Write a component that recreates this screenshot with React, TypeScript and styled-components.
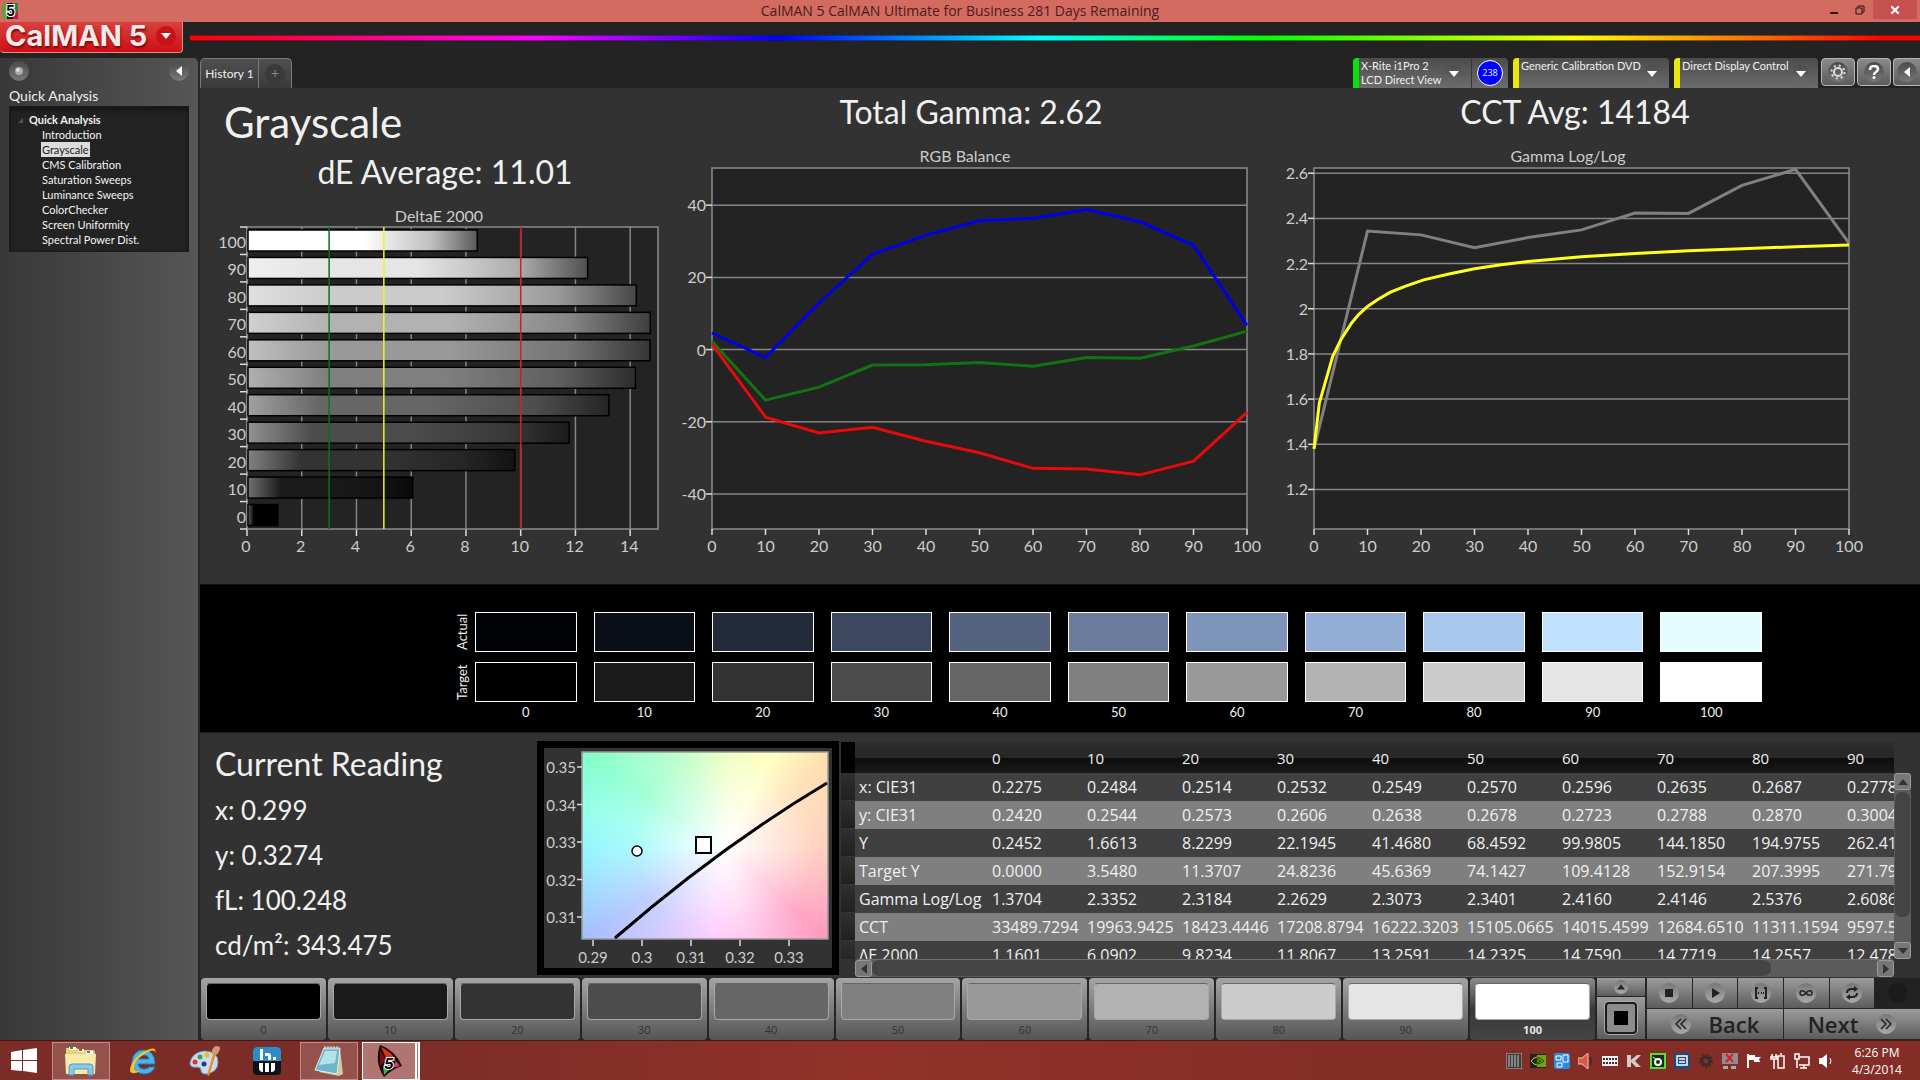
import React from 'react';
import styled, { createGlobalStyle, css } from 'styled-components';

const calibri = `Lato, 'Open Sans', sans-serif`;
const segoe = `'Open Sans', 'Noto Sans', sans-serif`;

const GlobalStyle = createGlobalStyle`
  *, *::before, *::after { box-sizing: border-box; }
  body { margin: 0; background: #232323; color: #f0f0f0; font-family: ${calibri}; }
  button { margin: 0; padding: 0; border: 0; background: none; color: inherit; font: inherit; cursor: pointer; }
  h1, h2, p, ul { margin: 0; padding: 0; font-weight: 400; }
  ul { list-style: none; }
  svg { display: block; }
`;

const Window = styled.div`
  display: flex;
  flex-direction: column;
  min-height: 100vh;
  overflow: hidden;
`;

/* ---------- title bar ---------- */

const TitleBar = styled.header`
  display: grid;
  grid-template-columns: 1fr auto 1fr;
  align-items: center;
  height: 22px;
  background: #d36b61;
  color: #4a1c1a;
  font: 14px/20px ${segoe};
`;
const AppMark = styled.svg`
  margin-left: 2px;
  overflow: visible;
`;
const WindowButtons = styled.div`
  display: flex;
  align-self: start;
  justify-content: flex-end;
  padding-right: 3px;
`;
const WindowButton = styled.button<{ $close?: boolean }>`
  display: grid;
  place-items: center;
  width: ${p => (p.$close ? 44 : 26)}px;
  height: 19px;
  background: ${p => (p.$close ? '#c75050' : 'transparent')};
`;

/* ---------- brand strip ---------- */

const BrandStrip = styled.div`
  display: flex;
  align-items: flex-start;
  gap: 7px;
  height: 36px;
`;
const Brand = styled.button`
  display: flex;
  align-items: center;
  justify-content: space-between;
  width: 183px;
  height: 31px;
  padding: 0 6px 2px 5px;
  border: 1px solid #d9938f;
  border-top: 0;
  border-left: 0;
  border-radius: 0 0 4px 4px;
  background: linear-gradient(#d8403f, #cf0f12);
  color: #f2e9e9;
  font: 700 29px/28px Inter, sans-serif;
  text-shadow: 1px 2px 2px #7a0a0a;
  white-space: nowrap;
`;
const BrandArrow = styled.span`
  display: grid;
  place-items: center;
  width: 20px;
  height: 20px;
  border-radius: 50%;
  background: #c51417;
`;
const Rainbow = styled.div`
  flex: 1;
  height: 6px;
  margin-top: 13px;
  border: solid rgba(30, 30, 30, 0.55);
  border-width: 1px 0;
  background: linear-gradient(90deg, #f00 0%, #f0f 20%, #00f 34%, #0ff 49%, #0f0 62%, #ff0 80%, #f00 98%) border-box;
`;

/* ---------- sidebar ---------- */

const Body = styled.div`
  display: flex;
  flex: 1;
`;
const Sidebar = styled.aside`
  flex: 0 0 200px;
  padding: 3px 9px 0;
  border-right: 2px solid #262626;
  border-radius: 0 6px 0 0;
  background: linear-gradient(90deg, #383838, #565656);
`;
const SidebarTop = styled.div`
  display: flex;
  justify-content: space-between;
`;
const RoundButton = styled.button`
  display: grid;
  place-items: center;
  width: 20px;
  height: 20px;
  border-radius: 50%;
  background: linear-gradient(#4a4a4a, #787878);
`;
const SidebarTitle = styled.h2`
  padding-top: 7px;
  font-size: 14px;
  line-height: 16px;
  margin-bottom: 2px;
`;
const Tree = styled.nav`
  height: 146px;
  padding: 6px 8px;
  border: 1px solid #1b1b1b;
  background: #232323;
  box-shadow: inset 0 3px 5px #141414;
  font-size: 11px;
  line-height: 15px;
`;
const TreeRoot = styled.div`
  display: flex;
  align-items: center;
  gap: 6px;
  font-weight: 700;
  line-height: 14px;
`;
const TreeLink = styled.a<{ $active?: boolean }>`
  display: table;
  margin-left: 23px;
  padding: 0 1px;
  color: ${p => (p.$active ? '#222' : '#f4f4f4')};
  background: ${p => (p.$active ? '#dcdcdc' : 'transparent')};
  text-decoration: none;
`;

/* ---------- tabs and source bar ---------- */

const Main = styled.main`
  display: flex;
  flex: 1;
  flex-direction: column;
  min-width: 0;
  background: #323232;
`;
const TabBar = styled.div`
  display: flex;
  justify-content: space-between;
  height: 30px;
  background: #232323;
`;
const Tabs = styled.div`
  display: flex;
  border: 1px solid #7a7a7a;
  border-bottom: 0;
  border-radius: 5px 5px 0 0;
  background: linear-gradient(#505050, #3a3a3a);
`;
const Tab = styled.button`
  width: 58px;
  border-right: 1px solid #7a7a7a;
  font-size: 12px;
`;
const AddTab = styled.button`
  display: grid;
  place-items: center;
  width: 32px;
  color: #8a8a8a;
  font: 14px/20px ${segoe};

  span {
    width: 20px;
    height: 20px;
    border-radius: 50%;
    background: #3a3a3a;
  }
`;
const Sources = styled.div`
  display: flex;
  gap: 5px;
`;
const Source = styled.div<{ $tone: string }>`
  display: flex;
  border-radius: 4px 4px 0 0;
  border-left: 6px solid ${p => p.$tone};
  background: linear-gradient(#4c4c4c, #6c6c6c);
`;
const SourceButton = styled.button<{ $width: number }>`
  display: flex;
  align-items: flex-start;
  justify-content: space-between;
  width: ${p => p.$width}px;
  padding: 1px 8px 0 2px;
  font-size: 11px;
  line-height: 14px;
  text-align: left;
  white-space: nowrap;
`;
const Chevron = styled.span`
  display: grid;
  place-items: center;
  flex: 0 0 18px;
  height: 18px;
  margin-top: 6px;
  border-radius: 50%;
  background: linear-gradient(#4c4c4c, #6a6a6a);
`;
const Count = styled.div`
  display: grid;
  place-items: center;
  width: 37px;
  border-left: 1px solid #383838;

  span {
    width: 26px;
    height: 26px;
    border: 1px solid #fff;
    border-radius: 50%;
    background: #00f;
    font: 9px/24px ${segoe};
    text-align: center;
  }
`;
const Tools = styled.div`
  display: flex;
  gap: 2px;
  margin-left: -2px;
`;
const Tool = styled.button<{ $edge?: boolean }>`
  display: grid;
  place-items: center;
  width: ${p => (p.$edge ? 27 : 34)}px;
  height: 28px;
  border: 1px solid #b5b5b5;
  border-right-width: ${p => (p.$edge ? 0 : 1)}px;
  border-radius: ${p => (p.$edge ? '4px 0 0 4px' : '4px')};
  background: linear-gradient(#8a8a8a, #5c5c5c);
`;

/* ---------- charts ---------- */

const Charts = styled.section`
  display: grid;
  grid-template-columns: 490fr 562fr 646fr;
  padding: 4px 22px 24px 0;
  border-bottom: 1px solid #111;
`;
const ChartColumn = styled.div`
  min-width: 0;
`;
const PageTitle = styled.h1`
  padding: 6px 0 6px 24px;
  font-size: 42px;
  line-height: 48px;
`;
const Metric = styled.h2`
  margin-bottom: 13px;
  font-size: 32px;
  line-height: 40px;
  text-align: center;
`;
const Chart = styled.svg`
  width: 100%;
  overflow: visible;
  font: 16px ${calibri};
  fill: #ccc;
`;

/* ---------- swatch band ---------- */

const Band = styled.section`
  display: grid;
  grid-template-columns: 21px repeat(11, minmax(0, 1fr));
  column-gap: 17px;
  row-gap: 10px;
  padding: 27px 141px 0 254px;
  height: 148px;
  align-content: start;
  border-bottom: 1px solid #1c1c1c;
  background: #000;
`;
const BandLabel = styled.div`
  display: grid;
  place-items: center;
  width: 17px;
  height: 40px;
  font: 13px/17px ${calibri};
  writing-mode: vertical-rl;
  transform: rotate(180deg);
`;
const Swatches = styled.div`
  display: contents;
`;
const Swatch = styled.div<{ $color: string }>`
  height: 40px;
  border: 1px solid #fff;
  background: ${p => p.$color};
  margin-left: -17px;
  margin-right: 17px;
`;
const SwatchName = styled.div`
  margin: -7px 17px 0 -17px;
  font-size: 13px;
  line-height: 14px;
  text-align: center;
`;

/* ---------- readings ---------- */

const Details = styled.section`
  display: flex;
  height: 245px;
  padding: 8px 9px 1px 15px;
`;
const Reading = styled.div`
  flex: 0 0 322px;
  padding-top: 1px;

  h2 { margin-bottom: 2px; font-size: 32px; line-height: 44px; }
  p { font-size: 26px; line-height: 45px; }
`;
const CiePanel = styled.div`
  flex: 0 0 302px;
  height: 234px;
  border: 7px solid #000;
`;
const CieChart = styled.svg`
  width: 288px;
  height: 220px;
  overflow: visible;
  font: 15px ${calibri};
  fill: #ccc;
  background:
    radial-gradient(circle at 58% 51%, #fff 0, rgba(255, 255, 255, 0.8) 28px, rgba(255, 255, 255, 0.3) 90px, transparent 170px),
    conic-gradient(from 0deg at 58% 51%, #e8ffb0 0deg, #ffffac 28deg, #ffd8a0 50deg, #ffc0a8 90deg,
      #ff88b4 132deg, #ffb4e4 165deg, #ffb8ff 185deg, #a4bcff 237deg, #88f4ff 268deg, #88ffe8 285deg, #80ffc8 304deg, #b0ffb8 338deg, #e8ffb0 360deg);
  background-position: 38px 4px;
  background-size: 246px 187px;
  background-repeat: no-repeat;
`;
const GridPanel = styled.div`
  display: grid;
  flex: 1;
  grid-template-columns: 14px minmax(0, 1fr) 17px;
  grid-template-rows: 217px 18px;
  min-width: 0;
  margin-left: 2px;
  padding-top: 1px;
`;
const RowHandles = styled.div`
  background: linear-gradient(#000 31px, transparent 31px),
    repeating-linear-gradient(#303030 31px, #202020 58px, #3a3a3a 58px, #303030 59px);
`;
const TableView = styled.div`
  overflow: hidden;
`;
const DataTable = styled.table`
  width: 1087px;
  table-layout: fixed;
  border-collapse: collapse;
  font: 16px/20px ${segoe};
  text-align: left;
  white-space: nowrap;

  col:first-child { width: 137px; }
  th, td { padding: 0; font-weight: 400; }
  th:first-child { padding-left: 4px; }
  thead th {
    height: 31px;
    background: linear-gradient(#2e2e2e, #262626 50%, #0c0c0c 50%, #1a1a1a);
    font-size: 15px;
  }
  tbody th, tbody td { height: 28px; }
  tbody tr { background: #404040; }
  tbody tr:nth-child(even) { background: #7f7f7f; }
`;
const VScroll = styled.div`
  display: flex;
  flex-direction: column;
  justify-content: space-between;
  margin-top: 31px;
  border-radius: 3px;
  background: #5c5c5c;
`;
const HScroll = styled.div`
  display: flex;
  grid-column: 2;
  justify-content: space-between;
  border-top: 1px solid #6e6e6e;
  border-radius: 4px;
  background: #5c5c5c;
`;
const ScrollButton = styled.button`
  display: grid;
  place-items: center;
  flex: 0 0 17px;
  width: 17px;
  border: 1px solid #9a9a9a;
  border-radius: 3px;
  background: #777;
`;
const Track = styled.div<{ $vertical?: boolean }>`
  flex: 1;
  ${p =>
    p.$vertical
      ? css`padding: 2px 1px 25px;`
      : css`padding: 0 106px 1px 0;`}

  div {
    height: 100%;
    border-radius: 7px;
    background: #444;
  }
`;

/* ---------- pattern strip ---------- */

const Strip = styled.section`
  display: flex;
  gap: 2px;
  height: 62px;
  padding: 0 0 1px 1px;
  background: #262626;
`;
const Patterns = styled.div`
  display: grid;
  flex: 1;
  grid-template-columns: repeat(11, minmax(0, 1fr));
  gap: 2px;
`;
const Pattern = styled.button<{ $active?: boolean }>`
  display: flex;
  flex-direction: column;
  padding: 5px 5px 0;
  border-radius: 4px;
  background: ${p => (p.$active ? 'linear-gradient(#8c8c8c, #3a3a3a 50%, #444)' : 'linear-gradient(#a4a4a4, #555)')};
  color: ${p => (p.$active ? '#e6e6e6' : '#333')};
  font: ${p => (p.$active ? 700 : 400)} 11px/20px ${segoe};
`;
const PatternColor = styled.span<{ $color: string }>`
  width: 100%;
  height: 37px;
  border: 1px solid #a8a8a8;
  border-top-color: #666;
  border-radius: 4px;
  background: ${p => p.$color};
`;
const PatternName = styled.span`
  width: 100%;
  text-align: center;
`;
const PatternSide = styled.div`
  display: grid;
  grid-template-rows: 18px 1fr;
  gap: 1px;
  width: 48px;
`;
const Transport = styled.div`
  display: grid;
  grid-template-columns: repeat(6, 1fr);
  grid-template-rows: 30px 1fr;
  gap: 1px;
  width: 273px;
`;
const Key = styled.button<{ $span?: number; $dim?: boolean }>`
  display: flex;
  align-items: center;
  justify-content: center;
  gap: 18px;
  grid-column: span ${p => p.$span ?? 1};
  background: ${p => (p.$dim ? '#222' : 'linear-gradient(#9c9c9c, #5c5c5c)')};
  color: #222;
  font: 600 22px/28px ${segoe};
`;
const KeyDisc = styled.span<{ $dim?: boolean; $small?: boolean }>`
  display: grid;
  place-items: center;
  width: ${p => (p.$small ? 14 : 20)}px;
  height: ${p => (p.$small ? 14 : 20)}px;
  border-radius: 50%;
  background: ${p => (p.$dim ? '#1b1b1b' : 'linear-gradient(#777, #aaa)')};
`;
const StopFrame = styled.span`
  display: grid;
  place-items: center;
  width: 32px;
  height: 32px;
  border: 2px solid #1c1c1c;
  border-radius: 4px;
  background: #8c8c8c;
  box-shadow: 0 0 0 1px #aaa;
`;

/* ---------- taskbar ---------- */

const Taskbar = styled.footer`
  display: flex;
  justify-content: space-between;
  height: 40px;
  border-top: 1px solid #4a1714;
  background: linear-gradient(90deg, #7c2c27, #7c2c27 20%, #90322a 45%, #822d26 75%, #852d27);
`;
const Pins = styled.div`
  display: flex;
  align-items: center;
  gap: 4px;
`;
const Pin = styled.button<{ $open?: boolean; $focus?: boolean }>`
  display: grid;
  place-items: center;
  width: 58px;
  height: 38px;
  border: 1px solid ${p => (p.$focus ? '#fff' : p.$open ? '#c08c88' : 'transparent')};
  background: ${p => (p.$focus ? '#b07570' : p.$open ? '#95524d' : 'transparent')};
  ${p => p.$focus && css`border-right: 5px double #fff;`}
`;
const Start = styled(Pin)`
  width: 48px;
`;
const Tray = styled.div`
  display: flex;
  align-items: center;
  gap: 8px;
  padding-right: 14px;

  button { width: 16px; height: 16px; }
`;
const Clock = styled.time`
  margin-left: 6px;
  width: 58px;
  font: 12px/17px ${segoe};
  text-align: center;
  color: #fff;
`;

/* ---------- data ---------- */

const levels = [0, 10, 20, 30, 40, 50, 60, 70, 80, 90, 100];
const grays = ['#000', '#1a1a1a', '#333', '#4c4c4c', '#666', '#808080', '#999', '#b2b2b2', '#ccc', '#e5e5e5', '#fff'];
const actual = ['#010206', '#0a0f18', '#232b3b', '#3d4960', '#53637f', '#697c9c', '#7d94ba', '#93aed6', '#a9c7ed', '#c0e0ff', '#e3fcff'];
const pages = ['Introduction', 'Grayscale', 'CMS Calibration', 'Saturation Sweeps', 'Luminance Sweeps', 'ColorChecker', 'Screen Uniformity', 'Spectral Power Dist.'];
const deltaE = [1.16, 6.09, 9.82, 11.81, 13.26, 14.23, 14.76, 14.77, 14.26, 12.48, 8.45];

const balance = [
  { color: '#0000e6', values: [4.6, -2.2, 12.9, 26.4, 31.7, 35.7, 36.4, 38.8, 35.4, 28.9, 6.7] },
  { color: '#127312', values: [2.3, -14, -10.4, -4.3, -4.2, -3.6, -4.6, -2.2, -2.4, 1, 5.1] },
  { color: '#e60a0a', values: [1.5, -18.7, -23.1, -21.5, -25.4, -28.6, -32.9, -33.1, -34.7, -30.9, -17.4] },
];
const gammaMeasured = [1.38, 2.344, 2.327, 2.27, 2.315, 2.349, 2.424, 2.422, 2.546, 2.617, 2.29];
const gammaTarget: [number, number][] = [
  [0, 1.38], [1, 1.583], [3.5, 1.789], [5, 1.862], [7, 1.936], [8.3, 1.973], [10, 2.01], [12, 2.042], [14.2, 2.072],
  [17, 2.099], [20.5, 2.128], [25, 2.153], [30, 2.177], [35, 2.195], [40, 2.209], [50, 2.23], [60, 2.245], [70, 2.257],
  [80, 2.266], [90, 2.274], [100, 2.282],
];

const rows: [string, string[]][] = [
  ['x: CIE31', ['0.2275', '0.2484', '0.2514', '0.2532', '0.2549', '0.2570', '0.2596', '0.2635', '0.2687', '0.2778']],
  ['y: CIE31', ['0.2420', '0.2544', '0.2573', '0.2606', '0.2638', '0.2678', '0.2723', '0.2788', '0.2870', '0.3004']],
  ['Y', ['0.2452', '1.6613', '8.2299', '22.1945', '41.4680', '68.4592', '99.9805', '144.1850', '194.9755', '262.4170']],
  ['Target Y', ['0.0000', '3.5480', '11.3707', '24.8236', '45.6369', '74.1427', '109.4128', '152.9154', '207.3995', '271.7950']],
  ['Gamma Log/Log', ['1.3704', '2.3352', '2.3184', '2.2629', '2.3073', '2.3401', '2.4160', '2.4146', '2.5376', '2.6086']],
  ['CCT', ['33489.7294', '19963.9425', '18423.4446', '17208.8794', '16222.3203', '15105.0665', '14015.4599', '12684.6510', '11311.1594', '9597.5210']],
  ['ΔE 2000', ['1.1601', '6.0902', '9.8234', '11.8067', '13.2591', '14.2325', '14.7590', '14.7719', '14.2557', '12.4780']],
];

/* ---------- chart drawings ---------- */

const Caret = ({ dir = 'down', color = '#fff', size = 10 }: { dir?: 'up' | 'down' | 'left' | 'right'; color?: string; size?: number }) => {
  const d = { up: 'M0 8 5 2l5 6z', down: 'M0 2h10L5 8z', left: 'M8 0v10L2 5z', right: 'M2 0v10l6-5z' }[dir];
  return (
    <svg width={size} height={size} viewBox="0 0 10 10" aria-hidden="true">
      <path d={d} fill={color} />
    </svg>
  );
};

function DeltaEChart() {
  const left = 47, top = 22, width = 411, height = 302, row = height / 11;
  const x = (v: number) => left + v * 27.37;
  return (
    <Chart viewBox="0 0 490 355" role="img" aria-label="DeltaE 2000">
      <defs>
        {levels.map((l, i) => {
          const v = Math.round(l * 2.55);
          const lite = Math.round(v + (255 - v) * 0.38);
          const end = Math.round(v * 0.35);
          const mid = Math.round(v * 0.75);
          return (
            <linearGradient id={`bar${l}`} key={l}>
              <stop offset="0" stopColor={`rgb(${lite},${lite},${lite})`} />
              <stop offset="0.2" stopColor={grays[i]} />
              <stop offset="0.5" stopColor={grays[i]} />
              <stop offset="0.8" stopColor={`rgb(${mid},${mid},${mid})`} />
              <stop offset="1" stopColor={`rgb(${end},${end},${end})`} />
            </linearGradient>
          );
        })}
      </defs>
      <text x="239" y="17" textAnchor="middle">DeltaE 2000</text>
      <rect x={left} y={top} width={width} height={height} fill="#232323" />
      {[0, 2, 4, 6, 8, 10, 12, 14].map(v => (
        <g key={v}>
          <path d={`M${x(v)} ${top}V${top + height}`} stroke="#858585" strokeWidth="1.5" />
          <path d={`M${x(v)} ${top + height}v7`} stroke="#ddd" strokeWidth="1.5" />
          <text x={x(v) - 1} y="347" textAnchor="middle">{v}</text>
        </g>
      ))}
      <rect x={left} y={top} width={width} height={height} fill="none" stroke="#8c8c8c" strokeWidth="1.5" />
      {levels.map((l, i) => {
        const y = top + (10 - i) * row;
        return (
          <g key={l}>
            <rect x={left + 1} y={y + 3} width={deltaE[i] * 27.37 - 2} height="21" fill={`url(#bar${l})`} stroke="#000" strokeWidth="1.5" />
            <path d={`M${left - 7} ${y}h7`} stroke="#ddd" strokeWidth="1.5" />
            <text x={left - 1} y={y + 21} textAnchor="end">{l}</text>
          </g>
        );
      })}
      <path d={`M${left - 7} ${top + height}h7`} stroke="#ddd" strokeWidth="1.5" />
      <path d={`M${x(3)} ${top}v${height}`} stroke="#107010" strokeWidth="1.5" />
      <path d={`M${x(5)} ${top}v${height}`} stroke="#f4f41e" strokeWidth="1.5" />
      <path d={`M${x(10)} ${top}v${height}`} stroke="#d81c1c" strokeWidth="1.5" />
    </Chart>
  );
}

interface LineChartProps {
  title: string;
  view: number;
  left: number;
  titleX: number;
  min: number;
  max: number;
  ticks: number[];
  lines: { color: string; points: [number, number][] }[];
}

function LineChart({ title, view, left, titleX, min, max, ticks, lines }: LineChartProps) {
  const top = 23, height = 361, width = 535;
  const x = (v: number) => left + (v / 100) * width;
  const y = (v: number) => top + ((max - v) / (max - min)) * height;
  return (
    <Chart viewBox={`0 0 ${view} 415`} role="img" aria-label={title}>
      <text x={titleX} y="17" textAnchor="middle">{title}</text>
      <rect x={left} y={top} width={width} height={height} fill="#232323" stroke="#8c8c8c" strokeWidth="1.5" />
      {ticks.map(t => (
        <g key={t}>
          <path d={`M${left} ${y(t)}h${width}`} stroke="#858585" strokeWidth="1.5" />
          <path d={`M${left - 6} ${y(t)}h6`} stroke="#ddd" strokeWidth="1.5" />
          <text x={left - 6} y={y(t) + 6} textAnchor="end">{t}</text>
        </g>
      ))}
      {levels.map(l => (
        <g key={l}>
          <path d={`M${x(l)} ${top + height}v6`} stroke="#ddd" strokeWidth="1.5" />
          <text x={x(l)} y="407" textAnchor="middle">{l}</text>
        </g>
      ))}
      {lines.map(line => (
        <polyline
          key={line.color}
          points={line.points.map(([px, py]) => `${x(px)},${y(py)}`).join(' ')}
          fill="none"
          stroke={line.color}
          strokeWidth="3"
        />
      ))}
    </Chart>
  );
}

const byLevel = (values: number[]) => values.map((v, i) => [levels[i], v] as [number, number]);

function Cie() {
  return (
    <CieChart viewBox="0 0 288 220" role="img" aria-label="CIE chromaticity">
      <rect x="38" y="4" width="246" height="187" fill="none" stroke="#999" strokeWidth="1.5" />
      {['0.35', '0.34', '0.33', '0.32', '0.31'].map((t, i) => (
        <g key={t}>
          <path d={`M33 ${19 + i * 37.5}h5`} stroke="#ddd" strokeWidth="1.5" />
          <text x="32" y={25 + i * 37.5} textAnchor="end">{t}</text>
        </g>
      ))}
      {['0.29', '0.3', '0.31', '0.32', '0.33'].map((t, i) => (
        <g key={t}>
          <path d={`M${49 + i * 49} 192v6`} stroke="#ddd" strokeWidth="1.5" />
          <text x={49 + i * 49} y="215" textAnchor="middle">{t}</text>
        </g>
      ))}
      <path d="M71 190Q176 99 283 35" fill="none" stroke="#000" strokeWidth="3" />
      <circle cx="93" cy="103" r="5" fill="#fff" stroke="#000" strokeWidth="1.5" />
      <rect x="152" y="89" width="15" height="16" fill="#fff" stroke="#000" strokeWidth="2" />
    </CieChart>
  );
}

/* ---------- icons ---------- */

const Folder = () => (
  <svg width="34" height="30" viewBox="0 0 34 30">
    <path d="M2 5V2h11l2 2h15l1 3v21H2z" fill="#e9cf79" />
    <path d="M5 1h7v3H5zM14 3h6v3h-6zM22 5h7v3h-7z" fill="#fff" />
    <path d="M6 1h3v2H6z" fill="#2c9a3c" /><path d="M15 3h3v2h-3z" fill="#c8402c" /><path d="M23 5h3v2h-3z" fill="#2c86c8" />
    <path d="M1 8h31l-1 20H2z" fill="#f8eba8" />
    <path d="M5 29v-8q0-3 3-3h18q3 0 3 3v8h-5v-6H10v6z" fill="#8cc8e6" stroke="#4c9cc8" />
  </svg>
);
const Explorer = () => (
  <svg width="32" height="32" viewBox="0 0 32 32">
    <path d="M28 19H11q1 5 6 5 4 0 5-2h6q-3 7-11 7Q6 28 5 17 6 5 17 5q11 1 11 14zM11 14h11q-1-4-5-4-5 0-6 4z" fill="#4db4ea" stroke="#1c7cc0" />
    <path d="M28 9q2-7-5-5Q12 7 5 18q-4 9 0 10 3 1 8-2-6 1-6-4 1-7 9-12 8-6 12-4z" fill="#f5c32c" />
  </svg>
);
const Paint = () => (
  <svg width="34" height="32" viewBox="0 0 34 32">
    <path d="M17 6q13 1 13 11 0 10-12 12-5 0-5-4 0-3-4-3-7 1-7-4Q4 7 17 6z" fill="#c8dcf0" stroke="#7c9cc0" />
    <circle cx="7" cy="17" r="2.5" fill="#d8342c" /><circle cx="12" cy="12" r="2.5" fill="#3ca43c" /><circle cx="19" cy="10" r="2.5" fill="#f0b820" />
    <circle cx="16" cy="19" r="2.5" fill="#2c3c70" />
    <path d="M28 9 21 31l-2-1 6-21z" fill="#e8902c" /><path d="M24 9q-1-6 4-8 5 0 4 3-1 4-4 6z" fill="#c89c70" />
  </svg>
);
const Hcfr = () => (
  <svg width="30" height="30" viewBox="0 0 30 30">
    <rect x="1" y="1" width="28" height="28" rx="4" fill="#0c1218" />
    <path d="M1 15V5q0-4 4-4h20q4 0 4 4v10z" fill="#2c8cc8" />
    <path d="M8 3h3v11H8zM13 7h3q3 0 3 3v4h-3v-4h-3zM21 11h3v3h-3z" fill="#fff" />
    <path d="M7 17h4v9q-4 0-4-4zM13 17h4v9h-4zM19 17h4v6q0 3-4 3z" fill="#fff" />
  </svg>
);
const Notepad = () => (
  <svg width="34" height="32" viewBox="0 0 34 32">
    <path d="M28 3l3 26-4 2-20-4z" fill="#d8c89c" />
    <path d="M12 3h16l-3 26L3 25z" fill="#6fb6c8" stroke="#d8f0f4" />
    <path d="M13 6h12l-2 12L7 20z" fill="#b4e0e8" />
    <path d="M13 1v4M16 1v4M19 1v4M22 1v4M25 1v4" stroke="#ddd" />
  </svg>
);
const CalmanIcon = () => (
  <svg width="34" height="34" viewBox="0 0 34 34">
    <path d="M8 1q15 5 22 21-10 3-18 11Q2 18 8 1z" fill="#160808" />
    <path d="M9 3q10 4 15 14l-10-3z" fill="#d8341c" /><path d="M8 6l6 10-6 6z" fill="#7c1010" />
    <path d="M24 17l4 5-8 2z" fill="#d83c7c" /><path d="M11 22l6 4-5 5z" fill="#3cb43c" />
    <text x="12" y="25" fontFamily="Inter, sans-serif" fontWeight="700" fontStyle="italic" fontSize="15" fill="#000" stroke="#fff" strokeWidth="2" paintOrder="stroke">5</text>
  </svg>
);

const trayIcons: [string, React.ReactNode][] = [
  ['Keyboard', <><rect width="16" height="16" fill="#3c3c3c" stroke="#bbb" /><path d="M2 3h12M2 5h12M2 7h12M2 9h12M2 11h12M2 13h12" stroke="#ccc" strokeDasharray="2 1" /></>],
  ['NVIDIA', <><rect width="16" height="14" y="1" fill="#222" /><path d="M7 2h9v12H7z" fill="#6ca414" /><path d="M1 8q6-7 13 0-7 6-13 0zM5 8q3-3 6 0-3 3-6 0z" fill="none" stroke="#2a3c0c" /><path d="M1 8q3-4 6-4M1 8q3 4 6 4" fill="none" stroke="#a4d83c" /></>],
  ['Graphics', <><rect width="16" height="16" rx="2" fill="#2c8cd8" /><path d="M2 3h5v4H2zM9 2h5v7H9zM3 10h5v4H3z" fill="none" stroke="#fff" /></>],
  ['Audio level', <><path d="M0 5h4l6-5v16l-6-5H0z" fill="#d85c44" stroke="#f4c0b0" /><path d="M12 4q3 4 0 8" fill="none" stroke="#222" /></>],
  ['Input', <><rect y="3" width="16" height="10" fill="#eee" /><path d="M1 6h14M1 10h14" stroke="#333" strokeWidth="2" strokeDasharray="2 1" /></>],
  ['Antivirus', <path d="M1 2h4v5l6-5h4L9 8l6 6h-5L5 9v5H1z" fill="#d0ccc8" />],
  ['Camera', <><rect x="1" y="1" width="14" height="14" fill="#123012" stroke="#5cd83c" strokeWidth="2" /><circle cx="8" cy="9" r="3" fill="none" stroke="#fff" strokeWidth="2" /><path d="M3 4l4 3" stroke="#fff" /></>],
  ['Display', <><rect width="16" height="16" fill="#1c4c78" /><path d="M3 3h10v9H3zM5 6h6M5 9h6" fill="none" stroke="#fff" strokeWidth="1.5" /></>],
  ['Settings', <><circle cx="8" cy="8" r="4" fill="none" stroke="#3c2c2c" strokeWidth="3" /><circle cx="8" cy="8" r="6" fill="none" stroke="#3c2c2c" strokeWidth="2" strokeDasharray="2 2" /></>],
  ['Network error', <><rect width="16" height="11" fill="#8c8c94" /><path d="M4 1l7 8M11 1 4 9" stroke="#e01c1c" strokeWidth="2" /><path d="M1 13h5v3H1zM9 13h5v3H9z" fill="#aaa" /></>],
  ['Action center', <><path d="M2 1v14" stroke="#fff" strokeWidth="2" /><path d="M3 2h6v2h6l-2 2 1 3H8V7H3z" fill="#fff" /></>],
  ['Power', <path d="M8 3h6v12H8zM10 1h2M4 6v10M2 1v3M6 1v3M1 4h6v2H1z" fill="none" stroke="#fff" strokeWidth="1.5" />],
  ['Network', <path d="M5 4h10v8H5M10 12v3M6 15h7M1 1h4v5H1zM3 6v9" fill="none" stroke="#fff" strokeWidth="1.5" />],
  ['Volume', <><path d="M1 5h3l5-4v14l-5-4H1z" fill="#fff" /><path d="M12 5q2 3 0 6" fill="none" stroke="#fff" /></>],
];

const keyIcons: [string, React.ReactNode][] = [
  ['Stop', <path d="M3 3h8v8H3z" fill="#222" />],
  ['Play', <path d="M4 2v10l8-5z" fill="#222" />],
  ['Read series', <path d="M4 2H2v10h2M10 2h2v10h-2M4 7h1M7 7h1M9 7h1" fill="none" stroke="#222" strokeWidth="2" />],
  ['Continuous', <path d="M7 7C5 4 1 4 1 7s4 3 6 0 6-3 6 0-4 3-6 0z" fill="none" stroke="#222" strokeWidth="1.5" />],
  ['Refresh', <><path d="M2 7q0-4 5-4h2M12 7q0 4-5 4H5" fill="none" stroke="#222" strokeWidth="2" /><path d="M9 0l4 3-4 3zM5 8l-4 3 4 3z" fill="#222" /></>],
];

const Chevrons = ({ flip }: { flip?: boolean }) => (
  <svg width="12" height="12" viewBox="0 0 12 12" aria-hidden="true">
    <path d={flip ? 'M1 1l5 5-5 5M6 1l5 5-5 5' : 'M6 1 1 6l5 5M11 1 6 6l5 5'} fill="none" stroke="#222" strokeWidth="1.5" />
  </svg>
);

export default function App() {
  return (
    <Window>
      <GlobalStyle />
      <TitleBar>
        <AppMark width="16" height="16" viewBox="0 0 16 16">
          <rect width="16" height="16" fill="#2a1010" />
          <path d="M0 0h5v16H0z" fill="#64a040" /><path d="M11 0h5v9h-5z" fill="#308048" /><path d="M11 9h5v7h-5z" fill="#b02048" />
          <text x="4" y="13" fontFamily="Inter, sans-serif" fontSize="14" fontWeight="700" fill="#000" stroke="#fff" strokeWidth="2" paintOrder="stroke">5</text>
        </AppMark>
        <span>CalMAN 5 CalMAN Ultimate for Business 281 Days Remaining</span>
        <WindowButtons>
          <WindowButton aria-label="Minimize"><svg width="10" height="10"><path d="M1 8h8" stroke="#2a1010" strokeWidth="2" /></svg></WindowButton>
          <WindowButton aria-label="Restore"><svg width="10" height="10"><path d="M1 3h6v6H1zM3 3V1h6v6H7" fill="none" stroke="#2a1010" /></svg></WindowButton>
          <WindowButton $close aria-label="Close"><svg width="8" height="8"><path d="M0 0l8 8M8 0 0 8" stroke="#fff" strokeWidth="2" /></svg></WindowButton>
        </WindowButtons>
      </TitleBar>

      <BrandStrip>
        <Brand>
          <span>CalMAN 5</span>
          <BrandArrow><Caret /></BrandArrow>
        </Brand>
        <Rainbow />
      </BrandStrip>

      <Body>
        <Sidebar>
          <SidebarTop>
            <RoundButton aria-label="Record">
              <svg width="10" height="10"><circle cx="5" cy="5" r="4" fill="#aaa" /><circle cx="4" cy="4" r="2" fill="#ddd" /></svg>
            </RoundButton>
            <RoundButton aria-label="Collapse"><Caret dir="left" /></RoundButton>
          </SidebarTop>
          <SidebarTitle>Quick Analysis</SidebarTitle>
          <Tree aria-label="Workflow">
            <TreeRoot>
              <svg width="5" height="5"><path d="M5 0v5H0z" fill="#555" /></svg>
              Quick Analysis
            </TreeRoot>
            <ul>
              {pages.map(p => (
                <li key={p}><TreeLink href="#" $active={p === 'Grayscale'}>{p}</TreeLink></li>
              ))}
            </ul>
          </Tree>
        </Sidebar>

        <Main>
          <TabBar>
            <Tabs>
              <Tab>History 1</Tab>
              <AddTab aria-label="Add tab"><span>+</span></AddTab>
            </Tabs>
            <Sources>
              <Source $tone="#0be00b">
                <SourceButton $width={112}>
                  <span>X-Rite i1Pro 2<br />LCD Direct View</span>
                  <Chevron><Caret /></Chevron>
                </SourceButton>
                <Count><span>238</span></Count>
              </Source>
              <Source $tone="#e8e80a">
                <SourceButton $width={150}>
                  <span>Generic Calibration DVD</span>
                  <Chevron><Caret /></Chevron>
                </SourceButton>
              </Source>
              <Source $tone="#e8e80a">
                <SourceButton $width={138}>
                  <span>Direct Display Control</span>
                  <Chevron><Caret /></Chevron>
                </SourceButton>
              </Source>
              <Tools>
                <Tool aria-label="Settings">
                  <RoundButton as="span">
                    <svg width="16" height="16" viewBox="0 0 16 16">
                      <circle cx="8" cy="8" r="4" fill="none" stroke="#ddd" strokeWidth="2" />
                      <circle cx="8" cy="8" r="6.5" fill="none" stroke="#ddd" strokeWidth="2" strokeDasharray="2 3.1" />
                    </svg>
                  </RoundButton>
                </Tool>
                <Tool aria-label="Help">
                  <RoundButton as="span">
                    <svg width="12" height="14" viewBox="0 0 12 14">
                      <path d="M2 5q0-4 4-4t4 3q0 2-2 3T6 10" fill="none" stroke="#fff" strokeWidth="2.5" /><circle cx="6" cy="12.5" r="1.5" fill="#fff" />
                    </svg>
                  </RoundButton>
                </Tool>
                <Tool $edge aria-label="Expand"><RoundButton as="span"><Caret dir="left" /></RoundButton></Tool>
              </Tools>
            </Sources>
          </TabBar>

          <Charts>
            <ChartColumn>
              <PageTitle>Grayscale</PageTitle>
              <Metric>dE Average: 11.01</Metric>
              <DeltaEChart />
            </ChartColumn>
            <ChartColumn>
              <Metric>Total Gamma: 2.62</Metric>
              <LineChart
                title="RGB Balance" view={562} left={22} titleX={275} min={-49.7} max={50.3} ticks={[40, 20, 0, -20, -40]}
                lines={balance.map(b => ({ color: b.color, points: byLevel(b.values) }))}
              />
            </ChartColumn>
            <ChartColumn>
              <Metric>CCT Avg: 14184</Metric>
              <LineChart
                title="Gamma Log/Log" view={646} left={62} titleX={316} min={1.025} max={2.623} ticks={[2.6, 2.4, 2.2, 2, 1.8, 1.6, 1.4, 1.2]}
                lines={[{ color: '#808080', points: byLevel(gammaMeasured) }, { color: '#ffff1e', points: gammaTarget }]}
              />
            </ChartColumn>
          </Charts>

          <Band>
            <BandLabel>Actual</BandLabel>
            <Swatches>{actual.map(c => <Swatch key={c} $color={c} />)}</Swatches>
            <BandLabel>Target</BandLabel>
            <Swatches>{grays.map(c => <Swatch key={c} $color={c} />)}</Swatches>
            <span />
            <Swatches>{levels.map(l => <SwatchName key={l}>{l}</SwatchName>)}</Swatches>
          </Band>

          <Details>
            <Reading>
              <h2>Current Reading</h2>
              <p>x: 0.299</p>
              <p>y: 0.3274</p>
              <p>fL: 100.248</p>
              <p>cd/m²: 343.475</p>
            </Reading>
            <CiePanel><Cie /></CiePanel>
            <GridPanel>
              <RowHandles />
              <TableView>
                <DataTable>
                  <colgroup><col />{levels.slice(0, 10).map(l => <col key={l} />)}</colgroup>
                  <thead>
                    <tr><th aria-label="Measure" />{levels.slice(0, 10).map(l => <th key={l} scope="col">{l}</th>)}</tr>
                  </thead>
                  <tbody>
                    {rows.map(([name, cells]) => (
                      <tr key={name}><th scope="row">{name}</th>{cells.map((c, i) => <td key={i}>{c}</td>)}</tr>
                    ))}
                  </tbody>
                </DataTable>
              </TableView>
              <VScroll>
                <ScrollButton aria-label="Scroll up"><Caret dir="up" color="#333" /></ScrollButton>
                <Track $vertical><div /></Track>
                <ScrollButton aria-label="Scroll down"><Caret color="#333" /></ScrollButton>
              </VScroll>
              <HScroll>
                <ScrollButton aria-label="Scroll left"><Caret dir="left" color="#333" /></ScrollButton>
                <Track><div /></Track>
                <ScrollButton aria-label="Scroll right"><Caret dir="right" color="#333" /></ScrollButton>
              </HScroll>
            </GridPanel>
          </Details>

          <Strip>
            <Patterns>
              {levels.map((l, i) => (
                <Pattern key={l} $active={l === 100}>
                  <PatternColor $color={grays[i]} />
                  <PatternName>{l}</PatternName>
                </Pattern>
              ))}
            </Patterns>
            <PatternSide>
              <Key aria-label="More patterns"><KeyDisc $small><Caret dir="up" color="#222" size={8} /></KeyDisc></Key>
              <Key aria-label="Pattern window">
                <StopFrame><svg width="14" height="14"><rect width="14" height="14" /></svg></StopFrame>
              </Key>
            </PatternSide>
            <Transport>
              {keyIcons.map(([name, icon]) => (
                <Key key={name} aria-label={name}>
                  <KeyDisc><svg width="14" height="14" viewBox="0 0 14 14">{icon}</svg></KeyDisc>
                </Key>
              ))}
              <Key $dim aria-label="Status"><KeyDisc $dim /></Key>
              <Key $span={3}><KeyDisc><Chevrons /></KeyDisc>Back</Key>
              <Key $span={3}>Next<KeyDisc><Chevrons flip /></KeyDisc></Key>
            </Transport>
          </Strip>
        </Main>
      </Body>

      <Taskbar>
        <Pins>
          <Start aria-label="Start">
            <svg width="26" height="26" viewBox="0 0 26 26"><path d="M0 4l11-2v10H0zM12 2l14-2v12H12zM0 13h11v10L0 22zM12 13h14v12l-14-2z" fill="#fff" /></svg>
          </Start>
          <Pin $open aria-label="File Explorer"><Folder /></Pin>
          <Pin aria-label="Internet Explorer"><Explorer /></Pin>
          <Pin aria-label="Paint"><Paint /></Pin>
          <Pin aria-label="HCFR"><Hcfr /></Pin>
          <Pin $open aria-label="Notepad"><Notepad /></Pin>
          <Pin $open $focus aria-label="CalMAN"><CalmanIcon /></Pin>
        </Pins>
        <Tray>
          {trayIcons.map(([name, icon]) => (
            <button key={name} aria-label={name}><svg width="16" height="16" viewBox="0 0 16 16">{icon}</svg></button>
          ))}
          <Clock>6:26 PM<br />4/3/2014</Clock>
        </Tray>
      </Taskbar>
    </Window>
  );
}
